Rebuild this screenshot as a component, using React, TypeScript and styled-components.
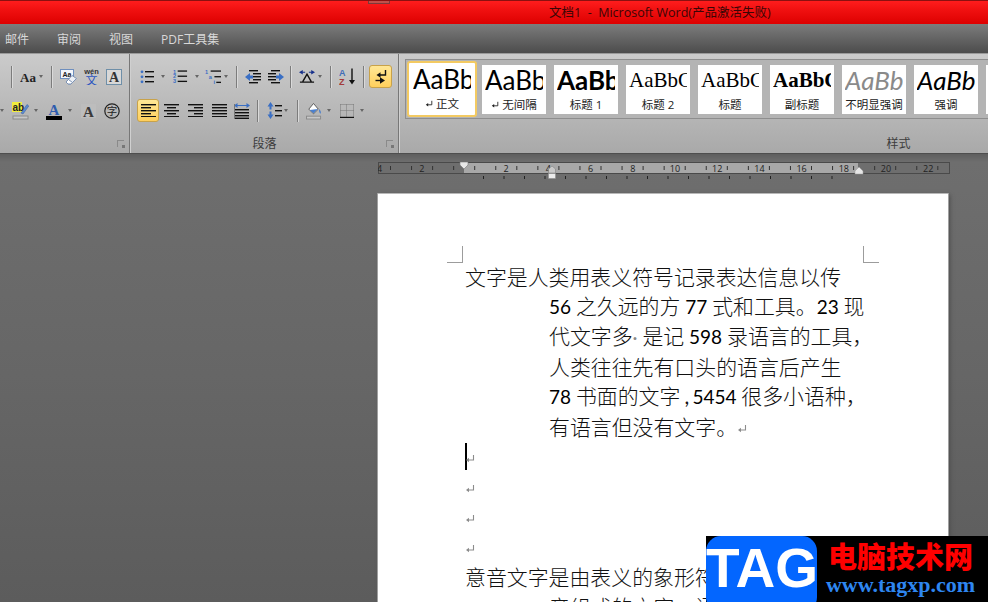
import React from "react";
import styled, { createGlobalStyle } from "styled-components";

const CJK = `"Noto Sans CJK SC", sans-serif`;
const UI = `"Open Sans", "Noto Sans CJK SC", sans-serif`;

const Global = createGlobalStyle`
  html, body { margin: 0; padding: 0; background: #666; }
  #root { width: 988px; height: 602px; }
`;

const Window = styled.div`
  position: relative;
  display: flex;
  flex-direction: column;
  width: 988px;
  height: 602px;
  overflow: hidden;
  font-family: ${UI};
`;

const TitleBar = styled.div`
  display: flex;
  flex: none;
  height: 24px;
  background: linear-gradient(#ff1d1d 0%, #f01010 40%, #dd0000 100%);
  border-top: 1px solid #8c1010;
  box-sizing: border-box;
`;

const QuickTab = styled.div`
  flex: none;
  width: 22px;
  height: 3px;
  margin-left: 368px;
  background: #c0504a;
  border: 1px solid #7a3a3a;
  border-top: none;
  box-sizing: border-box;
`;

const Title = styled.div`
  margin-left: 159px;
  font-size: 12.5px;
  line-height: 23px;
  color: #3a0606;
  white-space: pre;
`;

const TabBar = styled.div`
  display: flex;
  flex: none;
  height: 29px;
  padding-left: 5px;
  gap: 28px;
  align-items: center;
  background: linear-gradient(#7c7c7c, #4c4c4c);
  box-sizing: border-box;
`;

const Tab = styled.div`
  font-size: 12px;
  color: #d8d8d8;
`;

const Ribbon = styled.div`
  display: flex;
  flex: none;
  height: 101px;
  overflow: hidden;
  background: linear-gradient(#cbcbcb, #a9a9a9);
  border-top: 1px solid #9a9a9a;
  border-bottom: 1px solid #4e4e4e;
  box-sizing: border-box;
`;

const Group = styled.div<{ $w: number }>`
  display: flex;
  flex: none;
  flex-direction: column;
  width: ${(p) => p.$w}px;
  border-right: 1px solid #777;
  box-shadow: 1px 0 0 #d0d0d0;
  margin-right: 1px;
  box-sizing: border-box;
`;

const Rows = styled.div`
  display: flex;
  flex: 1;
  flex-direction: column;
  gap: 11px;
  padding-top: 11px;
`;

const Row = styled.div`
  display: flex;
  align-items: center;
  height: 23px;
`;

const ToolIcon = styled.div<{ $w: number; $ml: number }>`
  display: flex;
  flex: none;
  align-items: center;
  justify-content: center;
  width: ${(p) => p.$w}px;
  height: 23px;
  margin-left: ${(p) => p.$ml}px;
`;

const ActiveTool = styled(ToolIcon)`
  background: linear-gradient(#ffe796, #ffcf5c);
  border: 1px solid #c8a24a;
  border-radius: 3px;
  box-sizing: border-box;
`;

const Caret = styled.div<{ $ml: number }>`
  flex: none;
  width: 0;
  height: 0;
  margin-left: ${(p) => p.$ml}px;
  border-left: 2.5px solid transparent;
  border-right: 2.5px solid transparent;
  border-top: 3px solid #666;
`;

const Sep = styled.div<{ $ml: number }>`
  flex: none;
  width: 1px;
  height: 22px;
  margin-left: ${(p) => p.$ml}px;
  margin-right: 1px;
  background: #7c7c7c;
  box-shadow: 1px 0 0 #dadada;
`;

const GroupFooter = styled.div`
  display: grid;
  grid-template-columns: 1fr auto 1fr;
  align-items: center;
  height: 20px;
`;

const GroupLabel = styled.div`
  grid-column: 2;
  font-size: 12px;
  color: #3c3c3c;
`;

const Launcher = styled.div`
  grid-column: 3;
  justify-self: end;
  width: 7px;
  height: 7px;
  margin-right: 5px;
  border-left: 1px solid #8a8a8a;
  border-top: 1px solid #8a8a8a;
  box-sizing: border-box;
  position: relative;
  &::after {
    content: "";
    position: absolute;
    right: -1px;
    bottom: -1px;
    width: 3px;
    height: 3px;
    background: #777;
  }
`;

const GalleryArea = styled.div`
  flex: 1;
  padding: 5px 0 0 5px;
`;

const Gallery = styled.div`
  display: flex;
  align-items: center;
  gap: 8px;
  width: 600px;
  height: 60px;
  padding-left: 1px;
  background: #b4b4b4;
  border: 1px solid #8e8e8e;
  box-sizing: border-box;
`;

const StyleCard = styled.div<{ $active?: boolean }>`
  display: flex;
  flex: none;
  flex-direction: column;
  align-items: center;
  width: ${(p) => (p.$active ? 70 : 64)}px;
  height: ${(p) => (p.$active ? 56 : 49)}px;
  margin-right: ${(p) => (p.$active ? -3 : 0)}px;
  padding-top: ${(p) => (p.$active ? 1 : 0)}px;
  background: #fff;
  border: ${(p) => (p.$active ? "2px solid #f3ca62" : "none")};
  border-radius: ${(p) => (p.$active ? 3 : 0)}px;
  box-sizing: border-box;
`;

const Sample = styled.div<{ $font: string; $size: number; $bold?: boolean; $italic?: boolean; $color?: string }>`
  width: 58px;
  height: 31px;
  overflow: hidden;
  white-space: nowrap;
  font-family: ${(p) => p.$font};
  font-size: ${(p) => p.$size}px;
  line-height: 30px;
  font-weight: ${(p) => (p.$bold ? 700 : 400)};
  font-style: ${(p) => (p.$italic ? "italic" : "normal")};
  color: ${(p) => p.$color || "#000"};
`;

const StyleName = styled.div`
  font-size: 11.5px;
  line-height: 17px;
  color: #222;
  white-space: nowrap;
`;

const Workspace = styled.div`
  display: flex;
  flex: 1;
  flex-direction: column;
  min-height: 0;
  background: linear-gradient(#5e5e5e, #6e6e6e 8px, #666 220px, #5c5c5c);
`;

const RulerWrap = styled.div`
  flex: none;
  height: 28px;
  padding: 8px 0 0 378px;
  box-sizing: border-box;
  svg { display: block; }
`;

const Page = styled.div`
  flex: none;
  width: 570px;
  height: 420px;
  margin: 11px 0 0 378px;
  background: #fff;
  border-top: 1px solid #b8b8b8;
  box-shadow: -1px 0 0 #a0a0a0, 1px 0 0 #a0a0a0, 2px 2px 4px #4c4c4c;
  box-sizing: border-box;
`;

const CropRow = styled.div`
  display: flex;
  justify-content: space-between;
  height: 17px;
  margin-top: 52px;
  padding: 0 69px;
`;

const CropMark = styled.div<{ $side: "left" | "right" }>`
  width: 16px;
  height: 17px;
  border-bottom: 1px solid #9c9c9c;
  ${(p) => (p.$side === "left" ? "border-right" : "border-left")}: 1px solid #9c9c9c;
  box-sizing: border-box;
`;

const Body = styled.div`
  padding-left: 87px;
`;

const Line = styled.div<{ $hang?: boolean }>`
  display: flex;
  align-items: center;
  height: 30px;
  padding-left: ${(p) => (p.$hang ? 84 : 0)}px;
  padding-bottom: 4px;
  box-sizing: border-box;
  color: #111;
  white-space: pre;
`;

const Run = styled.span`
  font-family: ${CJK};
  font-size: 20.9px;
  font-weight: 300;
  line-height: 30px;
`;

const Num = styled.span`
  font-family: Lato, sans-serif;
  font-size: 19px;
  font-weight: 400;
  color: #000;
`;

const StrayDot = styled(Num)`
  color: #8a8a8a;
`;

const NarrowComma = styled.span`
  display: inline-block;
  width: 12px;
  padding-left: 4px;
  box-sizing: border-box;
  font-family: Lato, sans-serif;
  font-weight: 400;
`;

const Cursor = styled.div`
  flex: none;
  width: 1.5px;
  height: 27px;
  margin-right: -1.5px;
  background: #000;
`;

const ParaMark = styled.span`
  display: inline-flex;
  flex: none;
  transform: translateY(3px);
`;

const Watermark = styled.div`
  position: absolute;
  right: 0;
  bottom: 0;
  display: flex;
  width: 282px;
  height: 66px;
  background: #000;
`;

const TagBox = styled.div`
  flex: none;
  width: 111px;
  height: 76px;
  background: #0366ff;
  border-radius: 15px;
  color: #fff;
  font-family: "Liberation Sans", sans-serif;
  font-size: 55px;
  font-weight: 700;
  line-height: 64px;
  text-align: center;
`;

const WatermarkText = styled.div`
  display: flex;
  flex-direction: column;
  align-items: center;
  width: 167px;
`;

const WatermarkTitle = styled.div`
  font-family: ${CJK};
  font-size: 29px;
  line-height: 38px;
  font-weight: 900;
  color: #ff0000;
`;

const WatermarkUrl = styled.div`
  font-family: "Liberation Serif", serif;
  font-size: 22px;
  line-height: 22px;
  font-weight: 700;
  color: #2e86f0;
`;

const B = "#3a6fc4";

const Lines = ({ rows, x = 0 }: { rows: [number, number][]; x?: number }) => (
  <>
    {rows.map(([y, w], i) => (
      <rect key={i} x={x} y={y} width={w} height={1.4} fill="#111" />
    ))}
  </>
);

const Svg = ({ w, h, children }: { w: number; h: number; children: React.ReactNode }) => (
  <svg width={w} height={h} viewBox={`0 0 ${w} ${h}`}>
    {children}
  </svg>
);

const Bullets = () => (
  <Svg w={15} h={14}>
    {[1, 6, 11].map((y) => (
      <circle key={y} cx={2} cy={y + 0.8} r={1.4} fill={B} />
    ))}
    <Lines x={5} rows={[[1, 9], [6, 9], [11, 9]]} />
  </Svg>
);

const Numbered = () => (
  <Svg w={16} h={15}>
    {["1", "2", "3"].map((n, i) => (
      <text key={n} x={0} y={4.5 + i * 5} fontSize={6} fontWeight={700} fill={B} fontFamily="Liberation Sans">{n}</text>
    ))}
    <Lines x={5} rows={[[1, 10], [6.5, 10], [12, 10]]} />
  </Svg>
);

const Multilevel = () => (
  <Svg w={17} h={16}>
    <text x={0} y={5} fontSize={6} fontWeight={700} fill={B} fontFamily="Liberation Sans">1</text>
    <text x={4} y={10} fontSize={6} fontWeight={700} fill={B} fontFamily="Liberation Sans">a</text>
    <text x={9} y={15.5} fontSize={6} fontWeight={700} fill={B} fontFamily="Liberation Sans">i</text>
    <Lines x={6} rows={[[1, 11]]} />
    <Lines x={10} rows={[[7, 7]]} />
    <Lines x={12} rows={[[13, 5]]} />
  </Svg>
);

const IndentIcon = ({ flip }: { flip?: boolean }) => (
  <Svg w={16} h={14}>
    <g transform={flip ? "translate(16,0) scale(-1,1)" : undefined}>
      <path d="M0 7 L5 3 V5.5 H8 V8.5 H5 V11 Z" fill={B} />
    </g>
    <Lines x={flip ? 0 : 8} rows={[[3, 8], [6, 8], [9, 8]]} />
    <Lines x={flip ? 3 : 4} rows={[[0, 9], [12, 9]]} />
  </Svg>
);

const AsianLayout = () => (
  <Svg w={17} h={15}>
    <path d="M1 13.5 H16 M4 13 L8.5 5 L13 13" stroke="#111" strokeWidth={1.5} fill="none" />
    <path d="M0 3 L4 0.5 V5.5 Z M4 2.5 H6.5 V3.5 H4 Z M17 3 L13 0.5 V5.5 Z M13 2.5 H10.5 V3.5 H13 Z" fill="#16308c" />
  </Svg>
);

const Sort = () => (
  <Svg w={16} h={17}>
    <text x={0} y={7.5} fontSize={9} fontWeight={700} fill="#3f6db8" fontFamily="Liberation Sans">A</text>
    <text x={0} y={16.5} fontSize={9} fontWeight={700} fill="#a33a3a" fontFamily="Liberation Sans">Z</text>
    <path d="M13 0.5 V15" stroke="#111" strokeWidth={1.4} />
    <path d="M10 12 L13 16.5 L16 12 Z" fill="#111" />
  </Svg>
);

const Pilcrow = () => (
  <Svg w={12} h={15}>
    <path d="M10.5 1 V6 H5" stroke="#111" strokeWidth={1.4} fill="none" />
    <path d="M1.5 6 L5.5 3.2 V8.8 Z" fill="#111" />
    <path d="M0.5 11.5 H7" stroke="#111" strokeWidth={1.4} fill="none" />
    <path d="M5 14.8 V8.2 L10 11.5 Z" fill="#111" />
  </Svg>
);

const Align = ({ mode }: { mode: "left" | "center" | "right" | "justify" }) => {
  const widths = mode === "justify" ? [15, 15, 15, 15, 15] : mode === "left" ? [15, 10, 15, 10, 15] : [15, 9, 15, 9, 15];
  return (
    <Svg w={15} h={13}>
      {widths.map((w, i) => {
        const x = mode === "center" ? (15 - w) / 2 : mode === "right" ? 15 - w : 0;
        return <rect key={i} x={x} y={i * 3} width={w} height={1.4} fill="#111" />;
      })}
    </Svg>
  );
};

const Distributed = () => (
  <Svg w={16} h={16}>
    <path d="M3 2.5 H13" stroke={B} strokeWidth={1} />
    <path d="M0 2.5 L3.5 0 V5 Z M16 2.5 L12.5 0 V5 Z" fill={B} />
    <path d="M0.5 1 V16" stroke="#777" strokeWidth={1} />
    <Lines x={1} rows={[[6, 14], [9, 14], [12, 14], [14.6, 14]]} />
  </Svg>
);

const LineSpacing = () => (
  <Svg w={15} h={17}>
    <path d="M3.5 0 L6.5 4.5 H4.5 V7.5 H2.5 V4.5 H0.5 Z M3.5 17 L6.5 12.5 H4.5 V9.5 H2.5 V12.5 H0.5 Z" fill={B} />
    <Lines x={8} rows={[[3, 7], [8, 7], [13, 7]]} />
  </Svg>
);

const Shading = () => (
  <Svg w={17} h={18}>
    <path d="M3 7 L8 1 L13 7 L8 12 Z" fill="#fff" stroke="#555" />
    <path d="M4 8 L12.5 7 L8 11.5 Z" fill="#4a7fce" />
    <path d="M14 7 Q16.5 10 15.5 12 Q13.5 11 14 7 Z" fill="#4a7fce" />
    <rect x={0.5} y={14.5} width={15} height={3} fill="#c8c8c8" stroke="#8a8a8a" />
  </Svg>
);

const Borders = () => (
  <Svg w={14} h={14}>
    <path d="M0.5 0.5 H13.5 M0.5 6.5 H13.5 M0.5 0.5 V13 M6.5 0.5 V13 M13.5 0.5 V13" stroke="#777" strokeDasharray="1 1" fill="none" />
    <path d="M0 13.5 H14" stroke="#111" strokeWidth={1.4} />
  </Svg>
);

const CaseIcon = () => (
  <Svg w={17} h={14}>
    <text x={0} y={12} fontSize={13} fontWeight={700} fill="#222" fontFamily="Liberation Serif">Aa</text>
  </Svg>
);

const ClearFormat = () => (
  <Svg w={17} h={16}>
    <rect x={0.5} y={0.5} width={13} height={9} fill="#f4f6fb" stroke="#6f8fbe" />
    <text x={2.5} y={7.5} fontSize={7} fontWeight={700} fill="#222" fontFamily="Liberation Sans">Aa</text>
    <path d="M6 13 L12 6.5 L16.5 9.5 L11 15 H8 Z" fill="#eef1f6" stroke="#7c93b6" />
    <path d="M6 13 L8.5 10.5 L12.5 13.5 L11 15 H8 Z" fill="#fff" stroke="#7c93b6" />
  </Svg>
);

const Phonetic = () => (
  <Svg w={17} h={17}>
    <text x={8.5} y={6} fontSize={7.5} fontWeight={700} fill="#333" textAnchor="middle" fontFamily="Liberation Sans">wén</text>
    <text x={8.5} y={17} fontSize={12} fill="#2a55c0" textAnchor="middle" fontFamily={CJK}>文</text>
  </Svg>
);

const CharBorder = () => (
  <Svg w={16} h={16}>
    <rect x={0.5} y={0.5} width={15} height={15} fill="#d8d8d8" stroke="#6f8fa8" />
    <text x={8} y={13} fontSize={14} fontWeight={700} fill="#333" textAnchor="middle" fontFamily="Liberation Serif">A</text>
  </Svg>
);

const Highlight = () => (
  <Svg w={17} h={19}>
    <rect x={0} y={1} width={10} height={10} fill="#f2ee3c" />
    <text x={0.5} y={9.5} fontSize={10} fontWeight={700} fill="#222" fontFamily="Liberation Sans">ab</text>
    <path d="M9 12 L15 3.5 L16.8 5 L11 13 Z" fill="#5b8bd0" stroke="#395e9c" strokeWidth={0.5} />
    <rect x={1} y={15} width={15} height={3} fill="#c8c8c8" stroke="#8a8a8a" />
  </Svg>
);

const FontColor = () => (
  <Svg w={16} h={18}>
    <text x={8} y={13} fontSize={15} fontWeight={700} fill="#2e5cae" textAnchor="middle" fontFamily="Liberation Serif">A</text>
    <rect x={0} y={14} width={16} height={4} fill="#000" />
  </Svg>
);

const ShadedA = () => (
  <Svg w={15} h={16}>
    <rect x={0} y={1} width={15} height={14} fill="#bdbdbd" />
    <text x={7.5} y={13.5} fontSize={15} fontWeight={700} fill="#3a3a3a" textAnchor="middle" fontFamily="Liberation Serif">A</text>
  </Svg>
);

const Enclosed = () => (
  <Svg w={16} h={16}>
    <circle cx={8} cy={8} r={7.2} fill="none" stroke="#222" strokeWidth={1.2} />
    <text x={8} y={12} fontSize={10.5} fill="#222" textAnchor="middle" fontFamily={CJK}>字</text>
  </Svg>
);

const ReturnGlyph = ({ small }: { small?: boolean }) => (
  <svg width={small ? 8 : 10} height={small ? 8 : 10} viewBox="0 0 10 10">
    <path d="M8.5 1 V6 H2.5" stroke={small ? "#222" : "#8c8c8c"} strokeWidth={1.1} fill="none" />
    <path d="M1 6 L4 3.8 V8.2 Z" fill={small ? "#222" : "#8c8c8c"} />
  </svg>
);

const Mark = () => (
  <ParaMark>
    <ReturnGlyph />
  </ParaMark>
);

const CM = 21.1;
const ORIGIN = 86; // ruler x where 0 sits
const RULER_W = 574;

const Ruler = () => {
  const numbers = [-4, -2, 2, 4, 6, 8, 10, 12, 14, 16, 18, 20, 22];
  const upper = Array.from({ length: 27 }, (_, i) => 12 + i * 21.05);
  const lower = Array.from({ length: 18 }, (_, i) => 105 + i * 20.5);
  return (
    <svg width={RULER_W} height={20} viewBox={`0 1 ${RULER_W} 20`}>
      <rect x={0.5} y={1.5} width={571} height={11} fill="#6e6e6e" stroke="#4a4a4a" />
      <rect x={86} y={2} width={394} height={10} fill="#a8a8a8" />
      {numbers.map((n) => (
        <text key={n} x={ORIGIN + n * CM} y={10.5} fontSize={9} fill="#222" textAnchor="middle" fontFamily="Open Sans">
          {Math.abs(n)}
        </text>
      ))}
      {upper.map((x) => (
        <rect key={x} x={x} y={5} width={1} height={4} fill="#333" />
      ))}
      {lower.map((x) => (
        <rect key={x} x={x} y={15} width={1} height={3} fill="#222" />
      ))}
      <path d="M82 1 H90 V4 L86 8 L82 4 Z" fill="#e8e8e8" stroke="#777" strokeWidth={0.6} />
      <path d="M170.5 12 V8 L174 5 L177.5 8 V12 Z" fill="#c9c9c9" stroke="#777" strokeWidth={0.5} />
      <rect x={170.5} y={12.5} width={7} height={5} fill="#ececec" stroke="#888" strokeWidth={0.5} />
      <path d="M477 13 V10 L481 6 L485 10 V13 Z" fill="#e6e6e6" stroke="#999" strokeWidth={0.5} />
    </svg>
  );
};

const styles = [
  { s: "AaBbC", name: "无间隔", font: "Lato", size: 26, ret: true },
  { s: "AaBbC", name: "标题 1", font: "Lato", size: 26, bold: true },
  { s: "AaBbCc", name: "标题 2", font: "Liberation Serif", size: 21 },
  { s: "AaBbCc", name: "标题", font: "Liberation Serif", size: 21 },
  { s: "AaBbCc", name: "副标题", font: "Liberation Serif", size: 21, bold: true },
  { s: "AaBbCc", name: "不明显强调", font: "Lato", size: 26, italic: true, color: "#8a8a8a" },
  { s: "AaBbCc", name: "强调", font: "Lato", size: 26, italic: true },
];

export default function App() {
  return (
    <Window>
      <Global />
      <TitleBar>
        <QuickTab />
        <Title>文档1  -  Microsoft Word(产品激活失败)</Title>
      </TitleBar>
      <TabBar>
        <Tab>邮件</Tab>
        <Tab>审阅</Tab>
        <Tab>视图</Tab>
        <Tab>PDF工具集</Tab>
      </TabBar>
      <Ribbon>
        <Group $w={130}>
          <Rows>
            <Row>
              <Sep $ml={11} />
              <ToolIcon $w={17} $ml={7}><CaseIcon /></ToolIcon>
              <Caret $ml={2} />
              <Sep $ml={8} />
              <ToolIcon $w={17} $ml={7}><ClearFormat /></ToolIcon>
              <ToolIcon $w={17} $ml={6}><Phonetic /></ToolIcon>
              <ToolIcon $w={16} $ml={6}><CharBorder /></ToolIcon>
            </Row>
            <Row>
              <Caret $ml={0} />
              <ToolIcon $w={17} $ml={8}><Highlight /></ToolIcon>
              <Caret $ml={5} />
              <ToolIcon $w={16} $ml={8}><FontColor /></ToolIcon>
              <Caret $ml={6} />
              <ToolIcon $w={15} $ml={9}><ShadedA /></ToolIcon>
              <ToolIcon $w={16} $ml={8}><Enclosed /></ToolIcon>
            </Row>
          </Rows>
          <GroupFooter><Launcher /></GroupFooter>
        </Group>
        <Group $w={268}>
          <Rows>
            <Row>
              <ToolIcon $w={15} $ml={9}><Bullets /></ToolIcon>
              <Caret $ml={6} />
              <ToolIcon $w={15} $ml={8}><Numbered /></ToolIcon>
              <Caret $ml={7} />
              <ToolIcon $w={16} $ml={6}><Multilevel /></ToolIcon>
              <Caret $ml={3} />
              <Sep $ml={8} />
              <ToolIcon $w={16} $ml={7}><IndentIcon /></ToolIcon>
              <ToolIcon $w={16} $ml={7}><IndentIcon flip /></ToolIcon>
              <Sep $ml={6} />
              <ToolIcon $w={16} $ml={7}><AsianLayout /></ToolIcon>
              <Caret $ml={3} />
              <Sep $ml={8} />
              <ToolIcon $w={16} $ml={7}><Sort /></ToolIcon>
              <Sep $ml={8} />
              <ActiveTool $w={23} $ml={4}><Pilcrow /></ActiveTool>
            </Row>
            <Row>
              <ActiveTool $w={22} $ml={6}><Align mode="left" /></ActiveTool>
              <ToolIcon $w={15} $ml={5}><Align mode="center" /></ToolIcon>
              <ToolIcon $w={15} $ml={9}><Align mode="right" /></ToolIcon>
              <ToolIcon $w={15} $ml={9}><Align mode="justify" /></ToolIcon>
              <ToolIcon $w={16} $ml={7}><Distributed /></ToolIcon>
              <Sep $ml={7} />
              <ToolIcon $w={15} $ml={8}><LineSpacing /></ToolIcon>
              <Caret $ml={2} />
              <Sep $ml={9} />
              <ToolIcon $w={16} $ml={7}><Shading /></ToolIcon>
              <Caret $ml={5} />
              <ToolIcon $w={14} $ml={9}><Borders /></ToolIcon>
              <Caret $ml={6} />
            </Row>
          </Rows>
          <GroupFooter>
            <GroupLabel>段落</GroupLabel>
            <Launcher />
          </GroupFooter>
        </Group>
        <Group $w={998}>
          <GalleryArea>
            <Gallery>
              <StyleCard $active>
                <Sample $font="Lato" $size={26}>AaBbC</Sample>
                <StyleName><ReturnGlyph small /> 正文</StyleName>
              </StyleCard>
              {styles.map((st) => (
                <StyleCard key={st.name}>
                  <Sample $font={st.font} $size={st.size} $bold={st.bold} $italic={st.italic} $color={st.color}>
                    {st.s}
                  </Sample>
                  <StyleName>
                    {st.ret && <ReturnGlyph small />} {st.name}
                  </StyleName>
                </StyleCard>
              ))}
              <StyleCard />
            </Gallery>
          </GalleryArea>
          <GroupFooter><GroupLabel>样式</GroupLabel></GroupFooter>
        </Group>
      </Ribbon>
      <Workspace>
        <RulerWrap><Ruler /></RulerWrap>
        <Page>
          <CropRow>
            <CropMark $side="left" />
            <CropMark $side="right" />
          </CropRow>
          <Body>
            <Line><Run>文字是人类用表义符号记录表达信息以传</Run></Line>
            <Line $hang><Run><Num>56 </Num>之久远的方<Num> 77 </Num>式和工具。<Num>23 </Num>现</Run></Line>
            <Line $hang><Run>代文字多<StrayDot>· </StrayDot>是记<Num> 598 </Num>录语言的工具，</Run></Line>
            <Line $hang><Run>人类往往先有口头的语言后产生</Run></Line>
            <Line $hang><Run><Num>78 </Num>书面的文字<NarrowComma>,</NarrowComma><Num>5454 </Num>很多小语种，</Run></Line>
            <Line $hang><Run>有语言但没有文字。</Run><Mark /></Line>
            <Line><Cursor /><Mark /></Line>
            <Line><Mark /></Line>
            <Line><Mark /></Line>
            <Line><Mark /></Line>
            <Line><Run>意音文字是由表义的象形符号和表音符号</Run></Line>
            <Line $hang><Run>音组成的文字，语</Run></Line>
          </Body>
        </Page>
      </Workspace>
      <Watermark>
        <TagBox>TAG</TagBox>
        <WatermarkText>
          <WatermarkTitle>电脑技术网</WatermarkTitle>
          <WatermarkUrl>www.tagxp.com</WatermarkUrl>
        </WatermarkText>
      </Watermark>
    </Window>
  );
}
